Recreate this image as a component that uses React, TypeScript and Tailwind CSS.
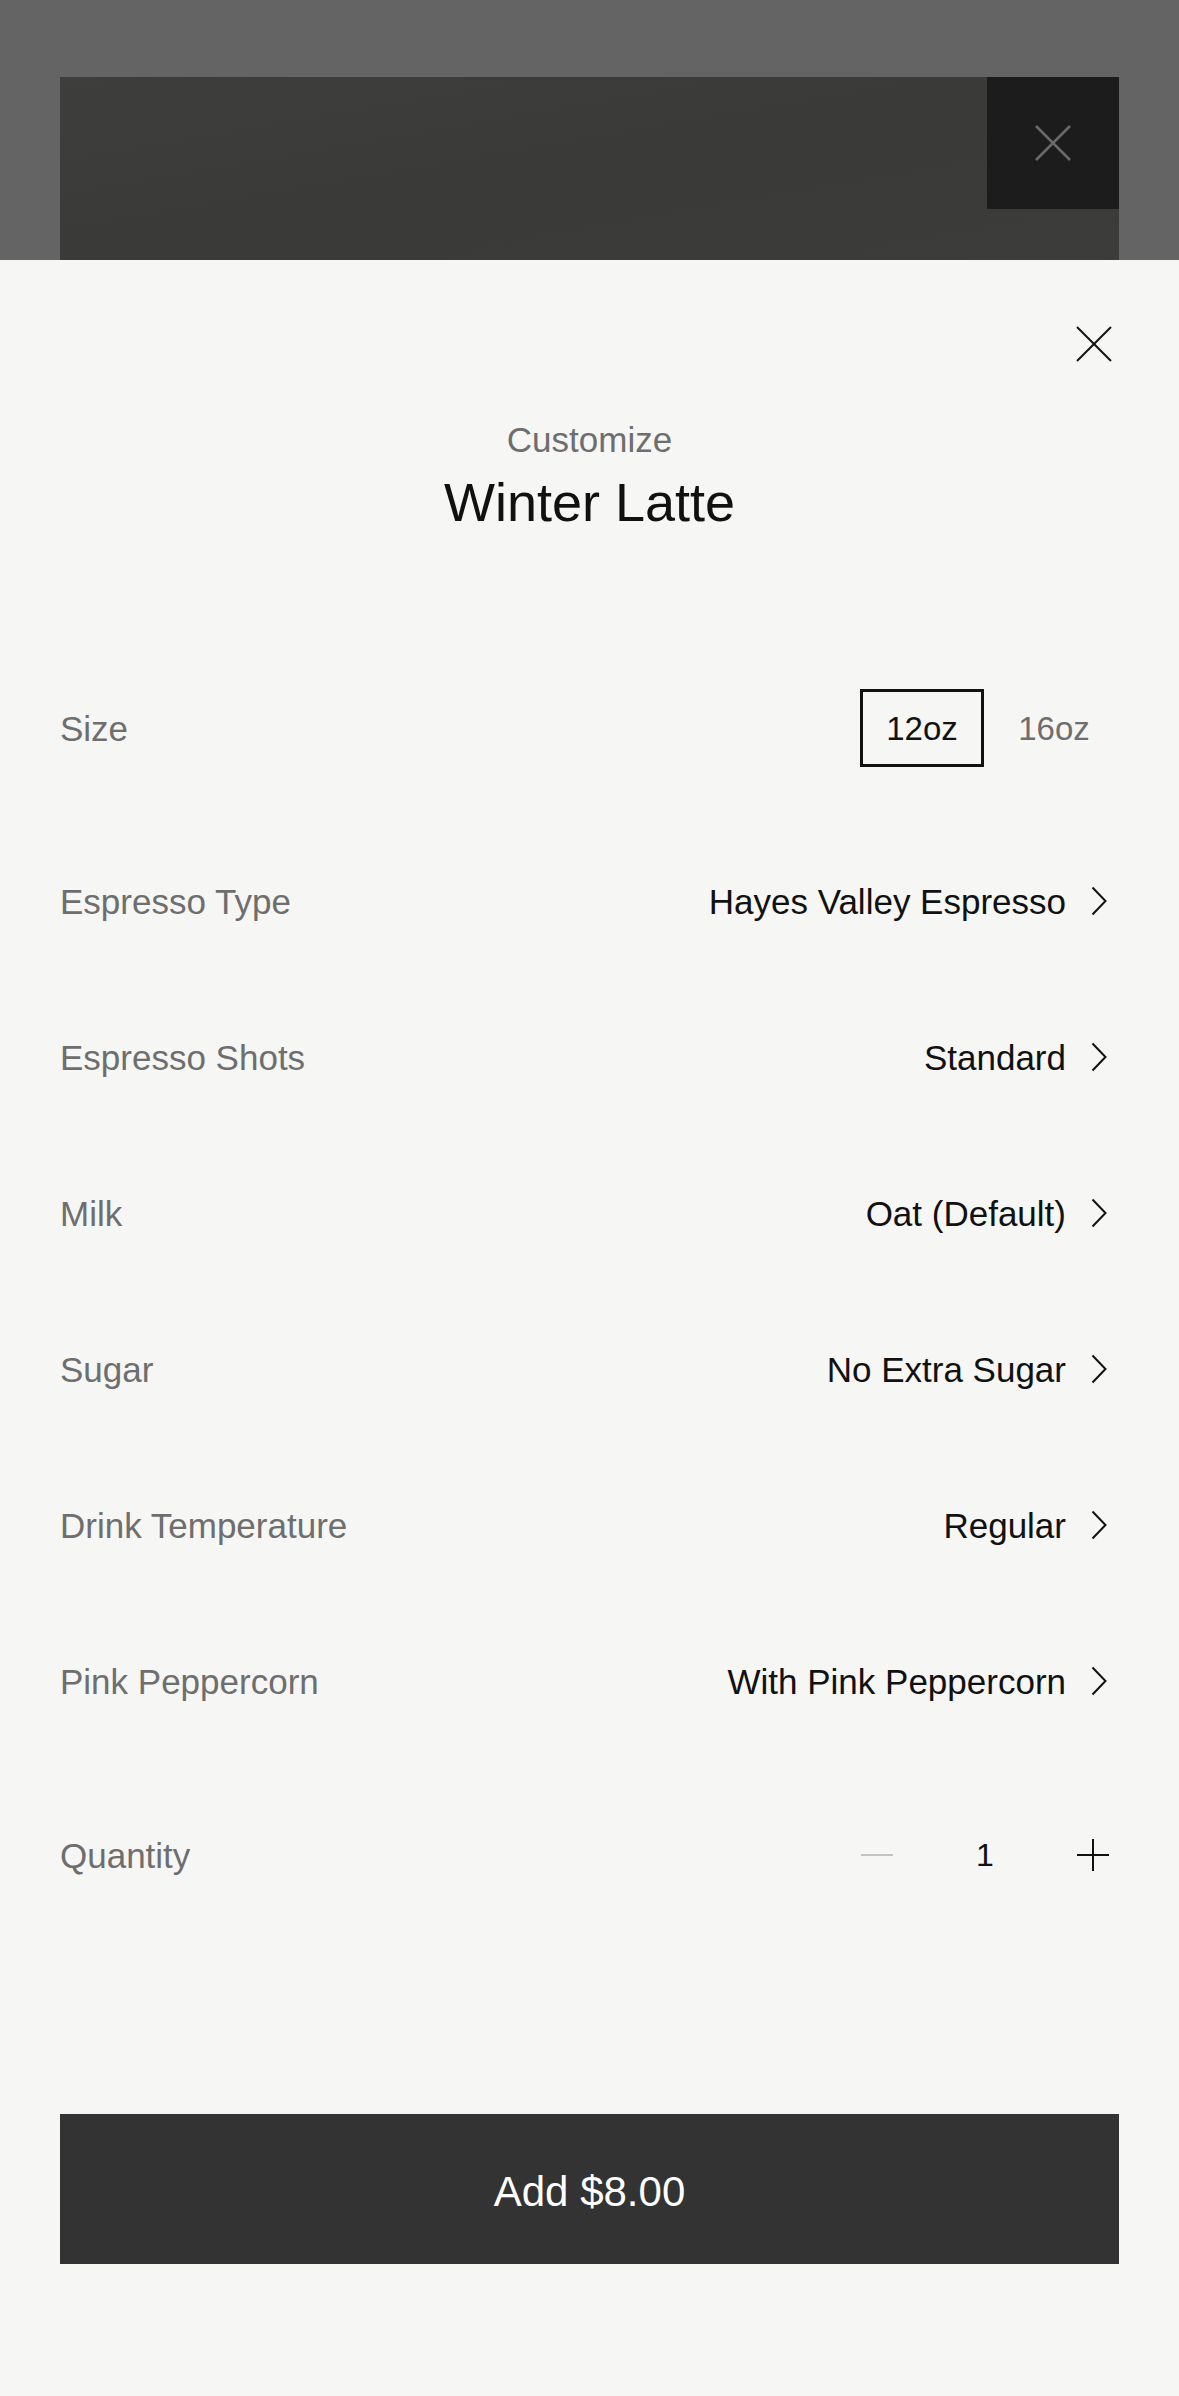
import { FC, useState } from "react";

const options = [
  { label: "Espresso Type", value: "Hayes Valley Espresso" },
  { label: "Espresso Shots", value: "Standard" },
  { label: "Milk", value: "Oat (Default)" },
  { label: "Sugar", value: "No Extra Sugar" },
  { label: "Drink Temperature", value: "Regular" },
  { label: "Pink Peppercorn", value: "With Pink Peppercorn" },
];

const Chevron: FC = () => (
  <svg width="16" height="30" viewBox="0 0 16 30" fill="none">
    <polyline points="1.5,1.5 14.5,15 1.5,28.5" stroke="#111" strokeWidth="2" />
  </svg>
);

const CloseIcon: FC<{ color: string; width: number }> = ({ color, width }) => (
  <svg width="36" height="36" viewBox="0 0 36 36" fill="none">
    <line x1="1" y1="1" x2="35" y2="35" stroke={color} strokeWidth={width} />
    <line x1="35" y1="1" x2="1" y2="35" stroke={color} strokeWidth={width} />
  </svg>
);

const App: FC = () => {
  const [size, setSize] = useState("12oz");
  const [qty, setQty] = useState(1);

  return (
    <div className="w-full bg-[#f6f6f4] font-['Liberation_Sans',Arial,sans-serif]">
      {/* backdrop with the page behind the sheet */}
      <div className="h-[260px] bg-[#646464] px-[60px] pt-[77px] flex">
        <div className="flex-1 flex justify-end items-start bg-linear-to-br from-[#3e3e3c] via-[#3a3a38] to-[#3c3c3a]">
          <div className="w-[132px] h-[132px] bg-[#1c1c1c] flex items-center justify-center">
            <CloseIcon color="#6a6a6a" width={2.5} />
          </div>
        </div>
      </div>

      {/* sheet */}
      <div className="bg-[#f6f6f4] px-[60px] pt-[59px] pb-[132px] flex flex-col">
        <div className="flex justify-end">
          <button className="w-[50px] h-[50px] flex items-center justify-center">
            <CloseIcon color="#111" width={2} />
          </button>
        </div>

        <p className="mt-[53px] text-center text-[35px] leading-none text-[#6e6e6e]">
          Customize
        </p>
        <h1 className="mt-[18px] text-center text-[54px] leading-none text-[#111]">
          Winter Latte
        </h1>

        <div className="mt-[160px] h-[78px] flex items-center justify-between">
          <span className="text-[35px] leading-none text-[#6e6e6e]">Size</span>
          <div className="flex gap-[8px] mr-[3px]">
            {["12oz", "16oz"].map((s) => (
              <button
                key={s}
                onClick={() => setSize(s)}
                className={
                  size === s
                    ? "w-[124px] h-[78px] border-[3px] border-[#111] text-[33px] leading-none text-[#111]"
                    : "w-[124px] h-[78px] border-[3px] border-transparent text-[33px] leading-none text-[#6e6e6e]"
                }
              >
                {s}
              </button>
            ))}
          </div>
        </div>

        <div className="mt-[56px] flex flex-col">
          {options.map((o) => (
            <div key={o.label} className="h-[156px] flex items-center justify-between">
              <span className="text-[35px] leading-none text-[#6e6e6e]">{o.label}</span>
              <div className="flex items-center gap-[25px] mr-[12px]">
                <span className="text-[35px] leading-none text-[#111]">{o.value}</span>
                <Chevron />
              </div>
            </div>
          ))}
        </div>

        <div className="mt-[57px] h-[78px] flex items-center justify-between">
          <span className="text-[35px] leading-none text-[#6e6e6e]">Quantity</span>
          <div className="flex items-center gap-[72px] mr-[10px]">
            <button onClick={() => setQty(Math.max(1, qty - 1))} className="flex items-center">
              <svg width="32" height="4" viewBox="0 0 32 4">
                <line x1="0" y1="2" x2="32" y2="2" stroke="#c4c4c4" strokeWidth="2" />
              </svg>
            </button>
            <span className="w-[40px] text-center text-[32px] leading-none text-[#111]">{qty}</span>
            <button onClick={() => setQty(qty + 1)} className="flex items-center">
              <svg width="32" height="32" viewBox="0 0 32 32">
                <line x1="0" y1="16" x2="32" y2="16" stroke="#111" strokeWidth="2" />
                <line x1="16" y1="0" x2="16" y2="32" stroke="#111" strokeWidth="2" />
              </svg>
            </button>
          </div>
        </div>

        <button className="mt-[220px] h-[150px] pt-[6px] bg-[#333333] text-white text-[42px] leading-none">
          Add $8.00
        </button>
      </div>
    </div>
  );
};

export default App;
